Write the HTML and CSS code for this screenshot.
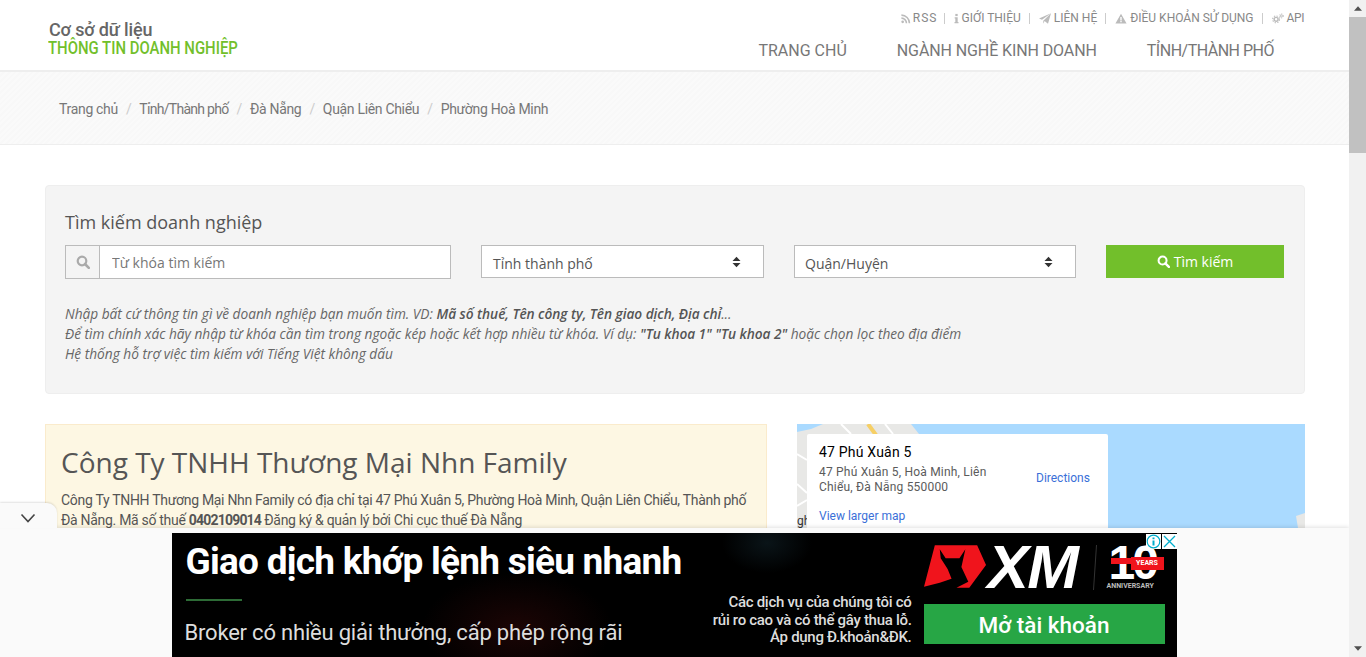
FILE: index.html
```html
<!DOCTYPE html>
<html lang="vi">
<head>
<meta charset="utf-8">
<title>Công Ty TNHH Thương Mại Nhn Family</title>
<link rel="stylesheet" href="styles.css">
</head>
<body>
<div class="app">
  <div class="page">
    <header class="header">
      <a class="logo"><span class="logo-top">Cơ sở dữ liệu</span><span class="logo-bottom">THÔNG TIN DOANH NGHIỆP</span></a>
      <div class="header-right">
        <ul class="toplinks">
          <li><svg class="ti ti-r" viewBox="0 0 12 12"><circle cx="2" cy="10" r="1.6"/><path d="M.5 4.600a7 7 0 0 1 7 7H5.600A5.100 5.100 0 0 0 .5 6.500zM.5 1a10.600 10.600 0 0 1 10.600 10.600H9.200A8.700 8.700 0 0 0 .5 2.900z"/></svg><span class="wide">RSS</span></li>
          <li><svg class="ti ti-i" viewBox="0 0 6 12"><rect x="1.600" y="0.500" width="2.800" height="2.600"/><path d="M.8 4.400h3.600v5.800h1v1.500H.6v-1.500h1V5.900H.8z"/></svg>GIỚI THIỆU</li>
          <li><svg class="ti ti-w" viewBox="0 0 14 12"><path d="M14 0 10.500 12 6.500 9 5 12V8.500L14 0 3.500 7.500 0 6z"/></svg>LIÊN HỆ</li>
          <li><svg class="ti ti-w" viewBox="0 0 14 12"><path fill-rule="evenodd" d="M7 .5 13.500 11.700H.5zM6.200 4.300v4h1.600v-4zM6.200 9v1.500h1.600V9z"/></svg>ĐIỀU KHOẢN SỬ DỤNG</li>
          <li class="api"><svg class="ti ti-w" viewBox="0 0 14 12"><g fill="none" stroke="#bbb"><circle cx="4.800" cy="7" r="2.300" stroke-width="1.700"/><circle cx="4.800" cy="7" r="4" stroke-width="1.300" stroke-dasharray="1.600 1.540"/><circle cx="11" cy="3" r="1.200" stroke-width="1.100"/><circle cx="11" cy="3" r="2.400" stroke-width="1" stroke-dasharray="1.200 1.310"/></g></svg>API</li>
        </ul>
        <nav class="mainnav">
          <a>TRANG CHỦ</a>
          <a class="nav-mid">NGÀNH NGHỀ KINH DOANH</a>
          <a class="nav-tight">TỈNH/THÀNH PHỐ</a>
        </nav>
      </div>
    </header>

    <div class="crumbs">
      <a>Trang chủ</a><i>/</i><a class="crumb-tight">Tỉnh/Thành phố</a><i>/</i><a>Đà Nẵng</a><i>/</i><a>Quận Liên Chiểu</a><i>/</i><a>Phường Hoà Minh</a>
    </div>

    <main class="container">
      <section class="search">
        <h2 class="search-title">Tìm kiếm doanh nghiệp</h2>
        <form class="search-row">
          <div class="input-group">
            <span class="addon"><svg class="q" viewBox="0 0 14 14"><circle cx="6" cy="6" r="4.300" fill="none" stroke="currentColor" stroke-width="2.200"/><path d="m9 9 3.800 3.800" stroke="currentColor" stroke-width="2.600" stroke-linecap="round"/></svg></span>
            <input class="kw" type="text" placeholder="Từ khóa tìm kiếm">
          </div>
          <div class="sel sel-a"><span>Tỉnh thành phố</span><svg class="updown" viewBox="0 0 9 12"><path d="M4.500.8 8.500 5H.5zM.5 7h8l-4 4.200z"/></svg></div>
          <div class="sel sel-b"><span>Quận/Huyện</span><svg class="updown" viewBox="0 0 9 12"><path d="M4.500.8 8.500 5H.5zM.5 7h8l-4 4.200z"/></svg></div>
          <button class="btn" type="button"><svg class="q q-btn" viewBox="0 0 14 14"><circle cx="6" cy="6" r="4.300" fill="none" stroke="currentColor" stroke-width="2.200"/><path d="m9 9 3.800 3.800" stroke="currentColor" stroke-width="2.600" stroke-linecap="round"/></svg>Tìm kiếm</button>
        </form>
        <div class="hint">
          <p>Nhập bất cứ thông tin gì về doanh nghiệp bạn muốn tìm. VD: <b>Mã số thuế, Tên công ty, Tên giao dịch, Địa chỉ</b>...</p>
          <p>Để tìm chính xác hãy nhập từ khóa cần tìm trong ngoặc kép hoặc kết hợp nhiều từ khóa. Ví dụ: <b>"Tu khoa 1" "Tu khoa 2"</b> hoặc chọn lọc theo địa điểm</p>
          <p>Hệ thống hỗ trợ việc tìm kiếm với Tiếng Việt không dấu</p>
        </div>
      </section>

      <section class="detail">
        <article class="company">
          <h1>Công Ty TNHH Thương Mại Nhn Family</h1>
          <p>Công Ty TNHH Thương Mại Nhn Family có địa chỉ tại 47 Phú Xuân 5, Phường Hoà Minh, Quận Liên Chiểu, Thành phố Đà Nẵng. Mã số thuế <b>0402109014</b> Đăng ký &amp; quản lý bởi Chi cục thuế Đà Nẵng</p>
        </article>
        <div class="map">
          <svg class="land" viewBox="0 0 508 110"><path d="M0 6 24 0h90l8 10V110H0z" fill="#e8e8e6"/><path d="M0 0h26L14 5 0 8z" fill="#aadaff"/><path d="M71 0l8 11" stroke="#f6cf65" stroke-width="4" fill="none"/><path d="M0 60l10 9M0 82l10-6M0 30l10 6M88 0l8 10M44 0l10 10" stroke="#fff" stroke-width="2" fill="none"/><path d="M499 92l9-3v21h-6z" fill="#e8e8e6"/></svg>
          <span class="map-edge">gh</span>
          <div class="map-card">
            <div class="card-main">
              <div class="card-title">47 Phú Xuân 5</div>
              <div class="card-addr">47 Phú Xuân 5, Hoà Minh, Liên Chiểu, Đà Nẵng 550000</div>
            </div>
            <a class="card-dir">Directions</a>
            <a class="card-larger">View larger map</a>
          </div>
        </div>
      </section>
    </main>

    <aside class="adbar">
      <div class="adtab"><svg viewBox="0 0 16 10"><path d="M1.500 1.500 8 8.500l6.500-7" fill="none" stroke="#444" stroke-width="1.600"/></svg></div>
      <div class="ad">
        <div class="ad-glow ad-glow-a"></div>
        <div class="ad-glow ad-glow-b"></div>
        <div class="ad-left">
          <div class="ad-head">Giao dịch khớp lệnh siêu nhanh</div>
          <div class="ad-rule"></div>
          <div class="ad-sub">Broker có nhiều giải thưởng, cấp phép rộng rãi</div>
        </div>
        <div class="ad-risk">Các dịch vụ của chúng tôi có<br>rủi ro cao và có thể gây thua lỗ.<br>Áp dụng Đ.khoản&amp;ĐK.</div>
        <div class="ad-right">
          <div class="ad-logo">
            <svg class="bull" viewBox="0 0 64 44"><path d="M0 42 11 0h43l9 20-17 23H33l12-6-7-15 4-18-6 9H22l-6-9 1 9 7 11 4 10-12 4z" fill="#f0141c"/></svg>
            <span class="xm">XM</span>
            <svg class="ad-div" viewBox="0 0 4 45"><path d="M3.500 0 .5 45" stroke="#333" stroke-width="1"/></svg>
            <div class="ten">
              <span class="ten-num">10</span>
              <span class="ten-band"></span>
              <span class="ten-tag">YEARS</span>
              <span class="ten-sub">ANNIVERSARY</span>
            </div>
          </div>
          <div class="ad-cta">Mở tài khoản</div>
        </div>
        <div class="ad-ctrl">
          <span class="ad-i"><svg viewBox="0 0 15 15"><circle cx="7.500" cy="7.500" r="6.300" fill="none" stroke="#00aecd" stroke-width="1.200"/><path d="M6.500 3.500h2v1.800h-2zM6.500 6.500h2v5h-2z" fill="#00aecd"/></svg></span>
          <span class="ad-x"><svg viewBox="0 0 15 15"><path d="M2 2l11 11M13 2 2 13" stroke="#00aecd" stroke-width="1.300"/></svg></span>
        </div>
      </div>
    </aside>
  </div>

  <div class="scrollbar">
    <div class="sb-btn"><svg viewBox="0 0 9 5"><path d="M4.500 0 9 5H0z"/></svg></div>
    <div class="sb-track"><div class="sb-thumb"></div></div>
    <div class="sb-btn"><svg viewBox="0 0 9 5"><path d="M0 0h9L4.500 5z"/></svg></div>
  </div>
</div>
</body>
</html>
```

FILE: styles.css
```css
* { box-sizing: border-box; }
html, body { margin: 0; height: 100%; overflow: hidden; }
body { font-family: Roboto, "Liberation Sans", sans-serif; color: #555; background: #fff; }
.app { display: flex; height: 657px; }
.page { position: relative; flex: 1; min-width: 0; height: 657px; overflow: hidden; }

.header { height: 72px; border-bottom: 2px solid #eee; display: flex; justify-content: space-between; padding: 0 44px 0 48px; }
.logo { display: flex; flex-direction: column; align-items: flex-start; padding-top: 20px; line-height: 19px; font-size: 18px; font-weight: 500; }
.logo-top { color: #666; letter-spacing: -0.15px; margin-left: 1px; }
.logo-bottom { color: #72bf2b; font-weight: 500; line-height: 18px; white-space: nowrap; transform: scaleX(0.829); transform-origin: left center; }
.header-right { display: flex; flex-direction: column; align-items: flex-end; }
.toplinks { list-style: none; margin: 0; padding: 12px 1px 0 0; display: flex; font-size: 12px; line-height: 13px; color: #888; }
.toplinks li { display: flex; align-items: center; padding: 0 8px 0 9px; border-left: 1px solid #ccc; height: 11px; margin-top: 1px; }
.toplinks li:first-child { border-left: 0; }
.toplinks .api { padding-right: 0; letter-spacing: -0.4px; }
.wide { letter-spacing: 1px; margin-right: -1px; }
.ti { height: 11px; fill: #bbb; margin-right: 2px; flex: none; }
.ti-r { width: 10px; }
.ti-i { width: 5px; }
.ti-w { width: 12px; margin-right: 3px; }
.mainnav { display: flex; gap: 50px; margin-top: 18px; padding-right: 31px; font-size: 16px; line-height: 18px; color: #777; }
.nav-mid { letter-spacing: -0.1px; }
.nav-tight { letter-spacing: -0.5px; }

.crumbs { height: 73px; background: repeating-linear-gradient(135deg, #fafafa 0 2px, #f8f8f8 2px 4px); border-bottom: 1px solid #eee; padding: 29px 0 0 59px; font-size: 14px; line-height: 16px; color: #777; letter-spacing: -0.32px; }
.crumbs i { font-style: normal; color: #ccc; padding: 0 8px; }
.crumb-tight { letter-spacing: -0.72px; }

.container { padding: 40px 44px 0 45px; }
.search { height: 209px; background: #f4f4f4; border: 1px solid #eee; border-radius: 4px; padding: 23px 19px 0; font-family: "Open Sans", sans-serif; }
.search-title { margin: 0; font-size: 18px; line-height: 26px; font-weight: 400; color: #555; }
.search-row { display: flex; align-items: flex-start; gap: 30px; margin-top: 10px; }
.input-group { width: 386px; height: 34px; display: flex; background: #fff; border: 1px solid #bbb; }
.addon { width: 34px; border-right: 1px solid #bbb; background: #f4f4f4; display: flex; align-items: center; justify-content: center; color: #aaa; }
.q { width: 14px; height: 14px; }
.kw { flex: 1; min-width: 0; border: 0; outline: 0; padding: 0 12px; font: 14px "Open Sans", sans-serif; background: transparent; }
.kw::placeholder { color: #777; opacity: 1; }
.sel { height: 33px; background: #fff; border: 1px solid #bbb; display: flex; justify-content: space-between; padding: 0 22px 0 11px; font-size: 14px; line-height: 35px; color: #555; }
.sel-a { width: 283px; }
.sel-b { width: 282px; padding-left: 10px; }
.updown { width: 9px; height: 12px; fill: #333; margin-top: 10px; }
.btn { width: 178px; height: 33px; background: #72bf2b; color: #fff; border: 0; padding: 0 0 1px; font: 14px "Open Sans", sans-serif; display: flex; align-items: center; justify-content: center; gap: 4px; }
.q-btn { width: 13px; height: 13px; }
.hint { margin-top: 25px; font-size: 13.7px; line-height: 20px; font-style: italic; color: #666; }
.hint p { margin: 0; }
.hint b { color: #555; font-weight: 600; letter-spacing: -0.05px; }

.detail { display: flex; gap: 30px; margin-top: 30px; }
.company { flex: none; width: 722px; height: 200px; background: #fdf7e3; border: 1px solid #faebcc; padding: 17px 15px; }
.company h1 { margin: 0; font: 400 28px/40px "Open Sans", sans-serif; color: #555; }
.company p { margin: 8px 0 0; font-size: 14px; line-height: 20px; color: #555; letter-spacing: -0.3px; }
.company b { font-weight: 700; letter-spacing: -0.8px; }
.map { position: relative; flex: none; width: 508px; height: 200px; background: #aadaff; overflow: hidden; }
.land { position: absolute; left: 0; top: 0; width: 508px; height: 110px; }
.map-edge { position: absolute; left: 0; top: 90px; font: 12px Roboto, sans-serif; color: #333; }
.map-card { position: absolute; left: 10px; top: 10px; width: 301px; height: 140px; background: #fff; border-radius: 2px; padding: 10px 12px; display: grid; grid-template-columns: 1fr 60px; grid-template-rows: 54px 24px; column-gap: 10px; row-gap: 11px; }
.card-title { font-size: 14px; line-height: 16px; color: #000; letter-spacing: 0.2px; }
.card-addr { margin-top: 5px; width: 180px; font-size: 12px; line-height: 15px; color: #5b5b5b; letter-spacing: 0.2px; }
.card-dir { align-self: center; font-size: 12px; color: #3a6fd8; margin-top: 14px; }
.card-larger { font-size: 12px; line-height: 14px; color: #3a6fd8; }

.adbar { position: absolute; left: 0; right: 0; bottom: 0; height: 129px; background: #fafafa; box-shadow: 0 -1px 4px rgba(0,0,0,.12); display: flex; justify-content: center; padding-top: 5px; }
.adtab { position: absolute; left: 0; top: -25px; width: 57px; height: 25px; background: #fafafa; border-top-right-radius: 10px; box-shadow: 0 -1px 2px rgba(0,0,0,.12); display: flex; align-items: center; justify-content: center; padding: 4px 2px 0 0; }
.adtab svg { width: 16px; height: 10px; }
.ad { position: relative; width: 1005px; height: 124px; background: #000; color: #fff; overflow: hidden; display: flex; justify-content: space-between; margin-left: -1px; }
.ad-glow { position: absolute; }
.ad-glow-a { left: 250px; top: 40px; width: 190px; height: 110px; background: radial-gradient(closest-side, #1c0505, #000); }
.ad-glow-b { left: 550px; top: -20px; width: 90px; height: 60px; background: radial-gradient(closest-side, #0a1418, #000); }
.ad-left { position: relative; padding: 8px 0 0 14px; width: 535px; }
.ad-head { font-size: 37px; line-height: 42px; font-weight: 700; letter-spacing: -0.75px; white-space: nowrap; }
.ad-rule { width: 56px; height: 2px; background: #2d6b36; margin-top: 16px; }
.ad-sub { margin: 18px 0 0 -1px; font-size: 22px; line-height: 28px; color: #ddd; white-space: nowrap; letter-spacing: -0.2px; }
.ad-risk { position: absolute; left: 535px; top: 61px; width: 205px; text-align: right; font-size: 15px; line-height: 17.5px; color: #ddd; font-weight: 500; letter-spacing: -0.3px; white-space: nowrap; }
.ad-right { position: absolute; left: 752px; top: 12px; width: 241px; }
.ad-logo { display: flex; align-items: flex-start; height: 44px; }
.bull { width: 63px; height: 44px; flex: none; }
.xm { font: italic 700 62px/44px "Liberation Sans", sans-serif; letter-spacing: -1.500px; color: #fff; margin-left: 1px; }
.ad-div { width: 4px; height: 45px; flex: none; margin-left: 15px; }
.ten { position: relative; margin-left: 12px; width: 60px; height: 45px; flex: none; }
.ten-num { display: block; font: 700 48px/36px "Liberation Sans", sans-serif; letter-spacing: -3px; }
.ten-band { position: absolute; left: 2px; top: 13px; width: 24px; height: 6px; background: #f0141c; }
.ten-tag { position: absolute; left: 22px; top: 12px; width: 33px; height: 13px; background: #f0141c; font-size: 7px; font-weight: 700; line-height: 13px; text-align: center; }
.ten-sub { position: absolute; left: -2px; top: 37px; font-size: 7px; font-weight: 700; line-height: 8px; color: #bbb; }
.ad-cta { margin-top: 15px; height: 40px; background: #27a645; text-align: center; font-size: 22.5px; line-height: 43px; font-weight: 500; }
.ad-ctrl { position: absolute; right: 0; top: 1px; display: flex; gap: 1px; }
.ad-i, .ad-x { width: 15px; height: 15px; background: #fff; display: block; }
.ad-i svg, .ad-x svg { display: block; width: 15px; height: 15px; }

.scrollbar { width: 17px; height: 657px; background: #f1f1f1; display: flex; flex-direction: column; }
.sb-btn { height: 17px; display: flex; align-items: center; justify-content: center; }
.sb-btn svg { width: 8px; height: 5px; fill: #505050; }
.sb-track { flex: 1; }
.sb-thumb { height: 136px; background: #c1c1c1; }
```
